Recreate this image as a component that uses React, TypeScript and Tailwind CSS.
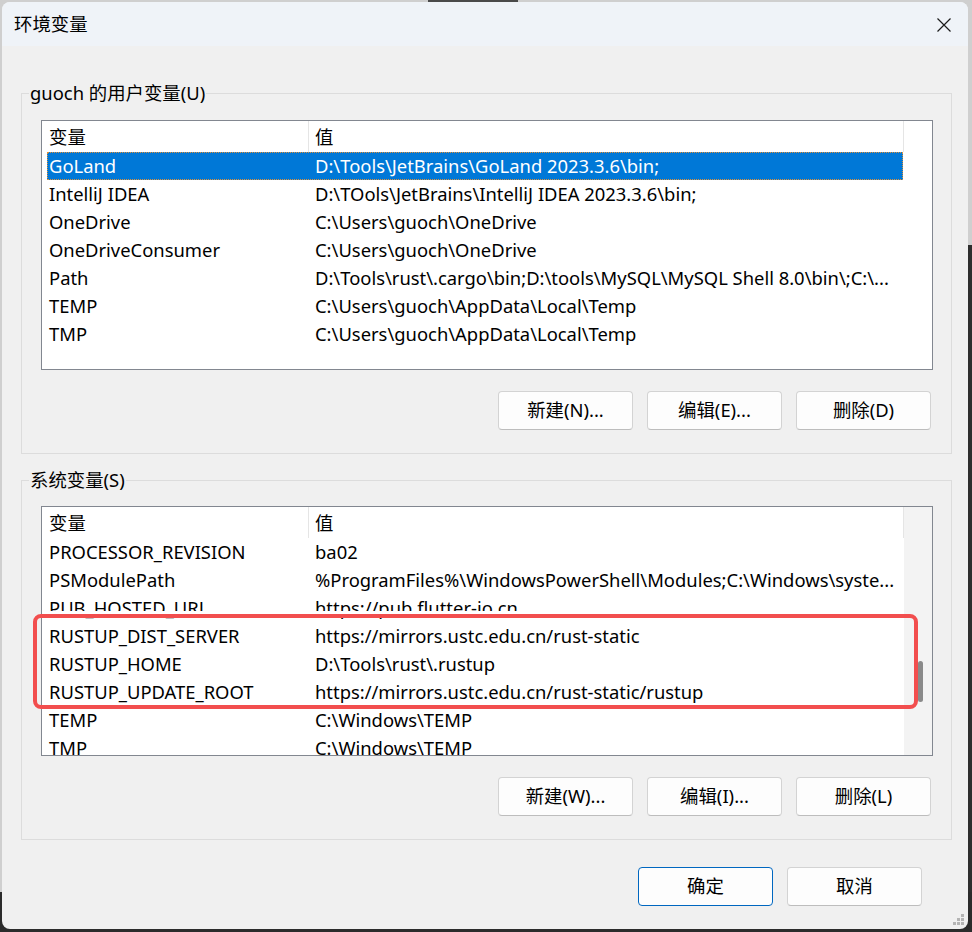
import React from "react";

// Windows "环境变量" dialog, with the red annotation box over the system list.

type Row = { name: string; value: string };

const userRows: Row[] = [
  { name: "GoLand", value: "D:\\Tools\\JetBrains\\GoLand 2023.3.6\\bin;" },
  { name: "IntelliJ IDEA", value: "D:\\TOols\\JetBrains\\IntelliJ IDEA 2023.3.6\\bin;" },
  { name: "OneDrive", value: "C:\\Users\\guoch\\OneDrive" },
  { name: "OneDriveConsumer", value: "C:\\Users\\guoch\\OneDrive" },
  { name: "Path", value: "D:\\Tools\\rust\\.cargo\\bin;D:\\tools\\MySQL\\MySQL Shell 8.0\\bin\\;C:\\..." },
  { name: "TEMP", value: "C:\\Users\\guoch\\AppData\\Local\\Temp" },
  { name: "TMP", value: "C:\\Users\\guoch\\AppData\\Local\\Temp" },
];

const systemRows: Row[] = [
  { name: "PROCESSOR_REVISION", value: "ba02" },
  { name: "PSModulePath", value: "%ProgramFiles%\\WindowsPowerShell\\Modules;C:\\Windows\\syste..." },
  { name: "PUB_HOSTED_URL", value: "https://pub.flutter-io.cn" },
  { name: "RUSTUP_DIST_SERVER", value: "https://mirrors.ustc.edu.cn/rust-static" },
  { name: "RUSTUP_HOME", value: "D:\\Tools\\rust\\.rustup" },
  { name: "RUSTUP_UPDATE_ROOT", value: "https://mirrors.ustc.edu.cn/rust-static/rustup" },
  { name: "TEMP", value: "C:\\Windows\\TEMP" },
  { name: "TMP", value: "C:\\Windows\\TEMP" },
];

function Btn({ label, primary }: { label: string; primary?: boolean }) {
  return (
    <button
      className={
        "flex h-[39px] w-[135px] items-center justify-center rounded-[4px] border bg-[#fdfdfd] leading-none text-black " +
        (primary ? "border-[#0067c0]" : "border-[#d3d3d3] border-b-[#bdbdbd]")
      }
    >
      {label}
    </button>
  );
}

function VarList({ rows, selected, scroll }: { rows: Row[]; selected?: number; scroll?: boolean }) {
  return (
    <div className="flex h-[250px] overflow-hidden border border-[#828790] bg-white">
      <div className="w-[862px] shrink-0">
        <div className="flex h-[31px] items-center">
          <div className="w-[266px] pl-[7px]">变量</div>
          <div className="h-full w-px bg-[#e5e5e5]" />
          <div className="flex-1 pl-[6px]">值</div>
          <div className="h-full w-px bg-[#e5e5e5]" />
        </div>
        <div className="pl-[5px]">
          {rows.map((r, i) => (
            <div
              key={r.name}
              className={
                "flex h-[28px] w-[856px] items-center whitespace-nowrap " +
                (i === selected ? "border border-dotted border-[#e0913a] bg-[#0078d7] text-white" : "text-black")
              }
            >
              <div className={i === selected ? "w-[260px] pl-[1px]" : "w-[261px] pl-[2px]"}>{r.name}</div>
              <div className="pl-[7px]">{r.value}</div>
            </div>
          ))}
        </div>
      </div>
      <div className={"relative flex-1 " + (scroll ? "bg-[#f3f3f3]" : "bg-white")}>
        {scroll && <div className="absolute left-[14px] top-[154px] h-[41px] w-[5px] rounded-full bg-[#8a8a8a]" />}
      </div>
    </div>
  );
}

function Group({ title, children }: { title: string; children: React.ReactNode }) {
  return (
    <fieldset className="border border-[#dcdcdc] pb-[23px] pl-[19px] pr-[18px]">
      <legend className="-ml-[12px] h-[24px] px-[1px] leading-[24px]">{title}</legend>
      {children}
    </fieldset>
  );
}

export default function App() {
  return (
    <div className="relative h-[932px] w-[972px] overflow-hidden bg-[#cfcfcf] font-['Noto_Sans','Noto_Sans_CJK_SC',sans-serif] text-[18.4px] text-black">
      {/* windows behind the dialog */}
      <div className="absolute right-0 top-[245px] h-[700px] w-[6px] bg-[#2e2e2e]" />
      <div className="absolute bottom-0 left-0 h-[40px] w-full bg-[#2b2b2b]" />
      <div className="absolute left-[428px] top-0 h-[4px] w-[90px] bg-[#4a4a4a]" />

      <div className="absolute left-[2px] top-[2px] flex h-[927px] w-[966px] flex-col overflow-hidden rounded-[8px] bg-[#f0f0f0]">
        <div className="flex h-[44px] shrink-0 items-center justify-between bg-[#eff3f8] pl-[12px] pr-[16px]">
          <span className="leading-none">环境变量</span>
          <svg width="16" height="16" viewBox="0 0 16 16" className="mt-[1px]">
            <path d="M1.5 1.5 L14.5 14.5 M14.5 1.5 L1.5 14.5" stroke="#1b1b1b" strokeWidth="1.2" />
          </svg>
        </div>

        <div className="flex flex-1 flex-col pl-[19px] pr-[16px] pt-[35px]">
          <Group title="guoch 的用户变量(U)">
            <div className="mt-[15px]">
              <VarList rows={userRows} selected={0} />
            </div>
            <div className="mr-[2px] mt-[21px] flex justify-end gap-[14px]">
              <Btn label="新建(N)..." />
              <Btn label="编辑(E)..." />
              <Btn label="删除(D)" />
            </div>
          </Group>

          <div className="mt-[14px]">
            <Group title="系统变量(S)">
              <div className="mt-[14px]">
                <VarList rows={systemRows} scroll />
              </div>
              <div className="mr-[2px] mt-[21px] flex justify-end gap-[14px]">
                <Btn label="新建(W)..." />
                <Btn label="编辑(I)..." />
                <Btn label="删除(L)" />
              </div>
            </Group>
          </div>

          <div className="mr-[30px] mt-[27px] flex justify-end gap-[14px]">
            <Btn label="确定" primary />
            <Btn label="取消" />
          </div>
        </div>

        {/* resize grip */}
        <svg width="12" height="12" viewBox="0 0 12 12" className="absolute bottom-[3px] right-[3px]">
          {[
            [8, 0],
            [4, 4],
            [8, 4],
            [0, 8],
            [4, 8],
            [8, 8],
          ].map(([x, y]) => (
            <rect key={`${x}-${y}`} x={x} y={y} width="3" height="3" fill="#b4b4b4" />
          ))}
        </svg>
      </div>

      {/* annotation */}
      <div className="absolute left-[42px] top-[611px] h-[4px] w-[862px] bg-white" />
      <div className="absolute left-[33px] top-[614px] h-[95px] w-[885px] rounded-[8px] border-[4px] border-[#f24e4e]" />
    </div>
  );
}
